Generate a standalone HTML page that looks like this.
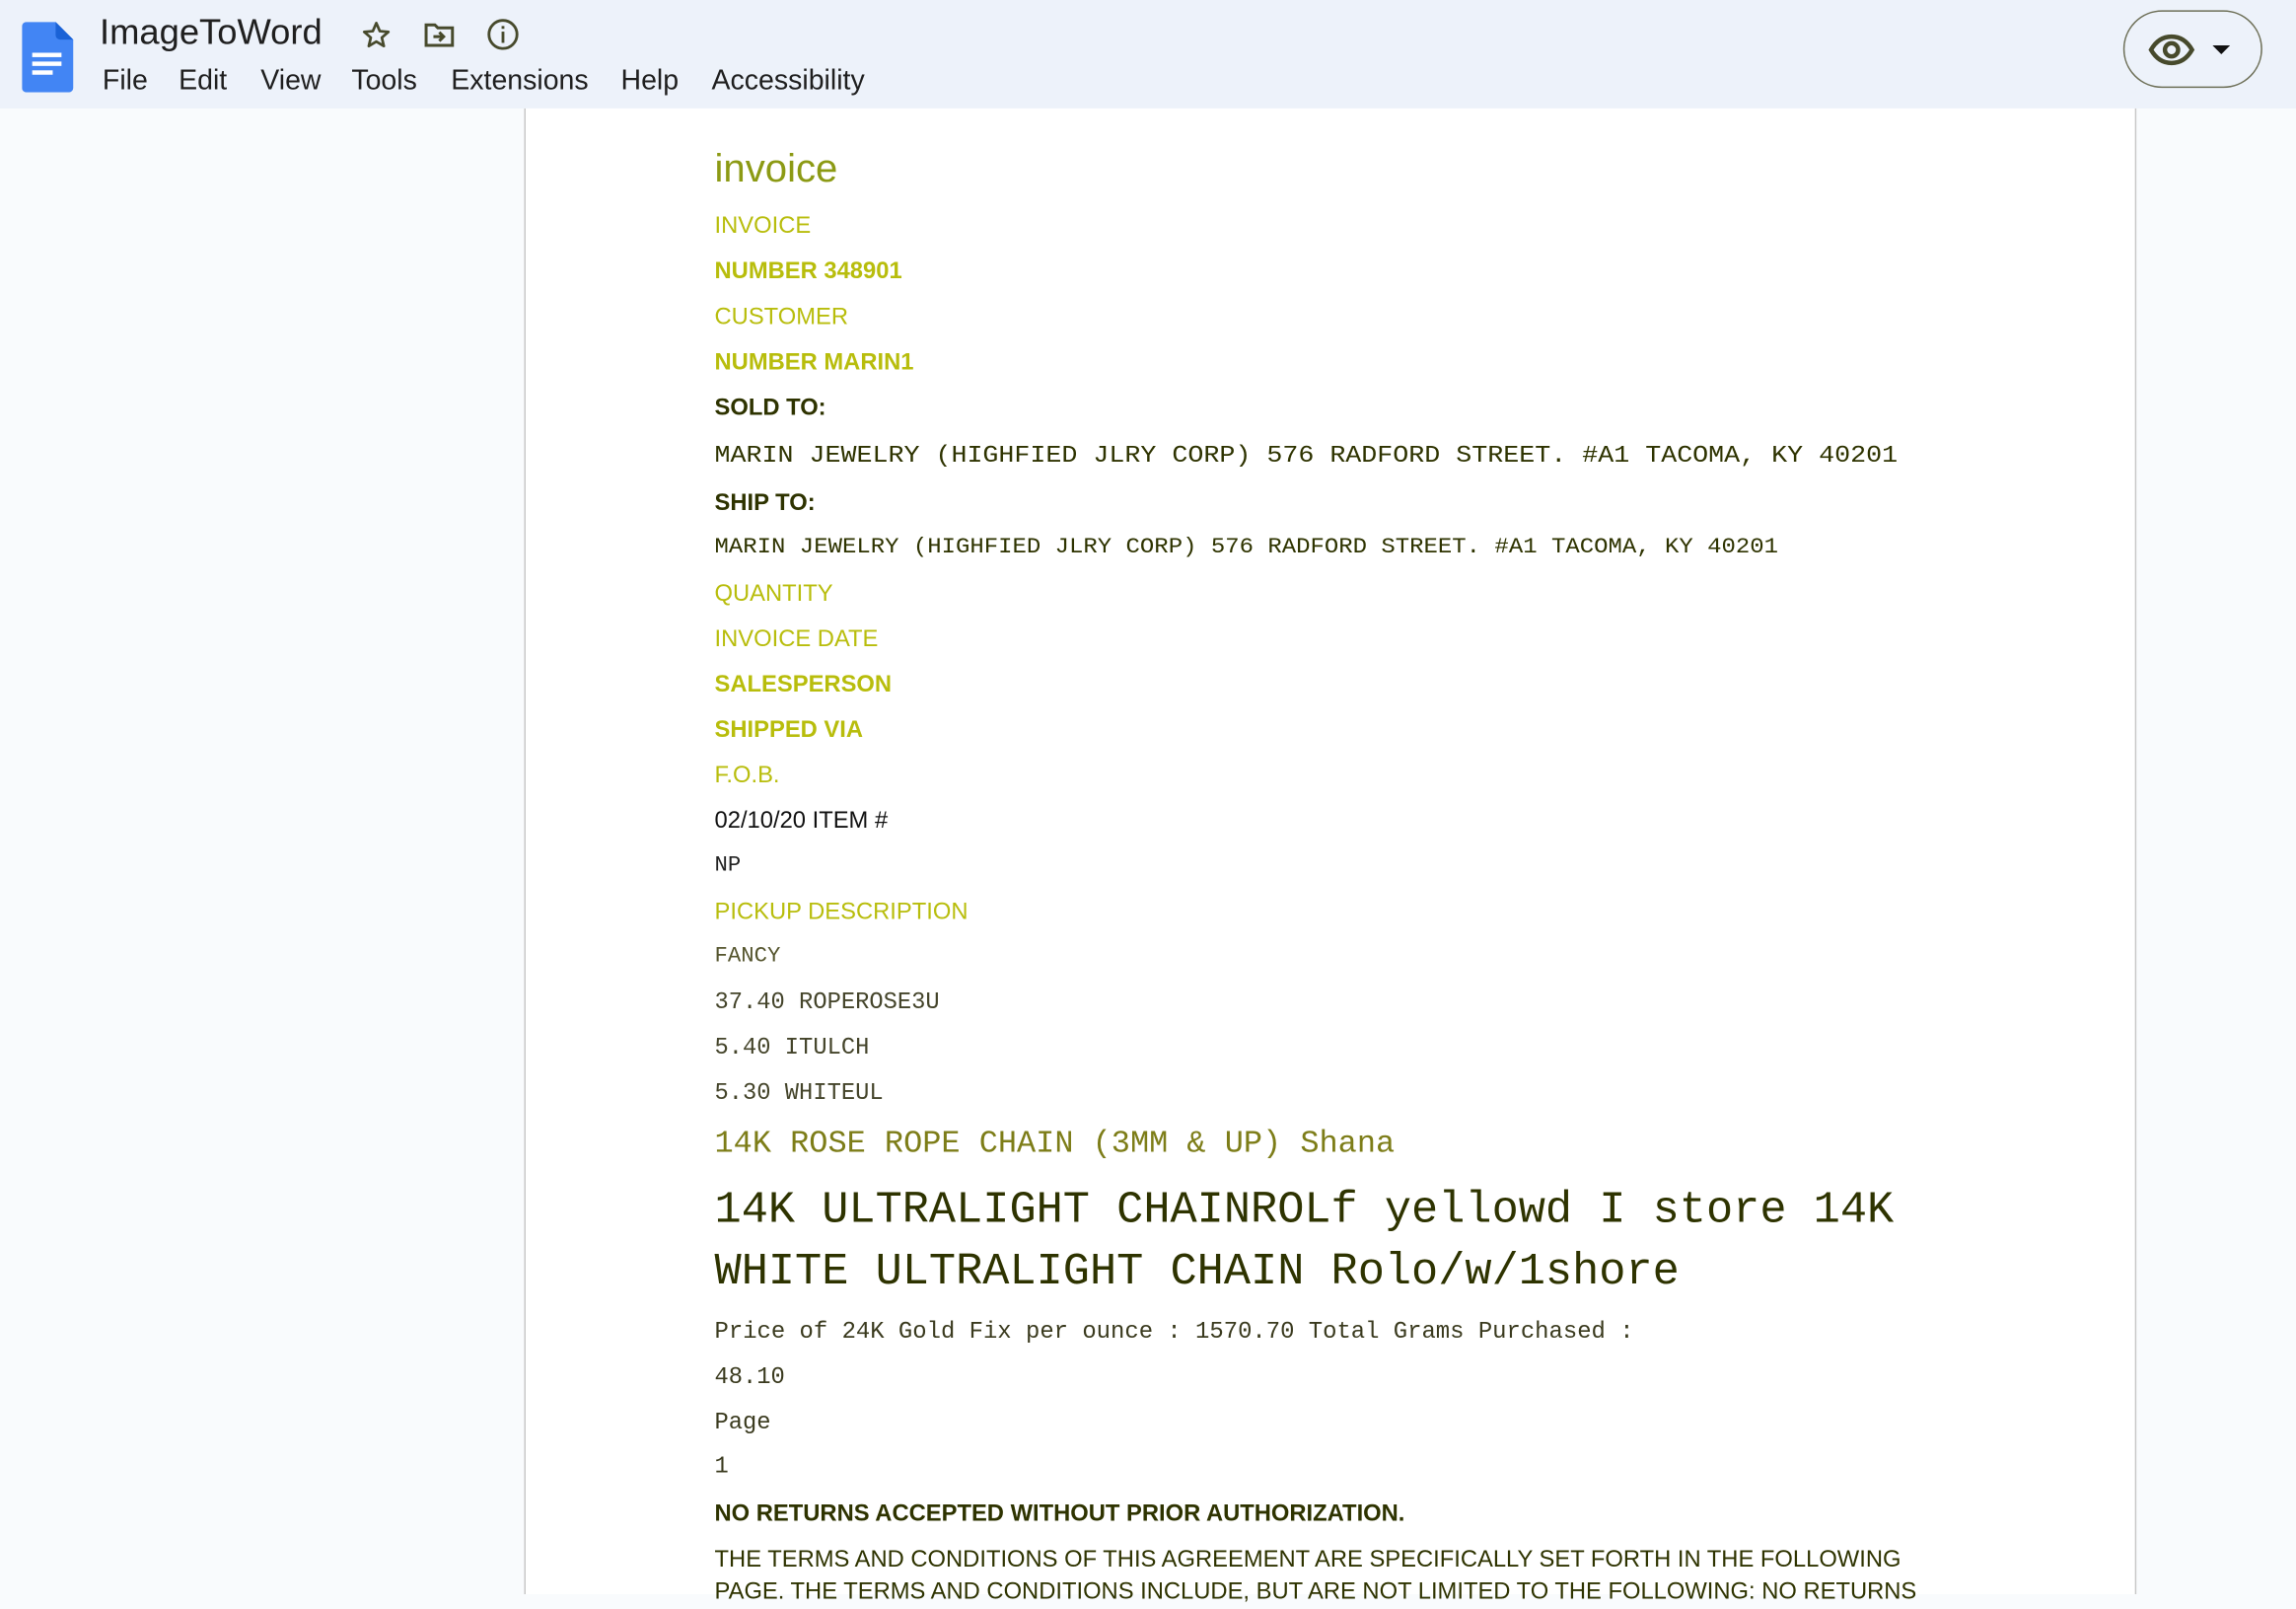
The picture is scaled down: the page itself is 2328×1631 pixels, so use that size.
<!DOCTYPE html>
<html><head><meta charset="utf-8"><style>
html,body{margin:0;padding:0;width:2328px;height:1616px;overflow:hidden;background:#f9fbfd;}
#w{position:absolute;left:0;top:0;width:1568px;height:1088px;transform:scale(1.48469,1.4853);transform-origin:0 0;font-family:"Liberation Sans",Arial,sans-serif;}
#hdr{position:absolute;left:0;top:0;width:1568px;height:74px;background:#edf2fa;}
#page{position:absolute;left:358px;top:74px;width:1099px;height:1014px;background:#fff;border-left:1px solid #c7c7c7;border-right:1px solid #c7c7c7;}
.t{position:absolute;left:488px;white-space:pre;line-height:20px;}
.s{font-size:16px;margin-top:2px;}
.m{font-family:"Liberation Mono","Courier New",monospace;}
.y{color:#b8bd0c;}
.d{color:#2e3300;}
.b{font-weight:bold;}
.menu{position:absolute;top:45px;font-size:19.2px;color:#1f1f1f;}
</style></head><body><div id="w">
<div id="hdr">
 <svg style="position:absolute;left:15px;top:15px" width="36" height="48" viewBox="0 0 36 48">
  <path d="M3 0H23L35 12V45a3 3 0 0 1-3 3H3a3 3 0 0 1-3-3V3a3 3 0 0 1 3-3z" fill="#4285f4"/>
  <path d="M23 0L35 12H26a3 3 0 0 1-3-3z" fill="#1a62d6"/>
  <rect x="7" y="21" width="20" height="3" fill="#fff"/><rect x="7" y="27" width="20" height="3" fill="#fff"/><rect x="7" y="33" width="14" height="3" fill="#fff"/>
 </svg>
 <div style="position:absolute;left:68px;top:9px;font-size:24.5px;color:#1f1f1f;">ImageToWord</div>
 <svg style="position:absolute;left:246px;top:13px" width="22" height="22" viewBox="0 0 24 24"><path d="M12 3l2.6 6 6.4.6-4.9 4.2 1.5 6.3L12 16.8 6.4 20.1l1.5-6.3L3 9.6l6.4-.6z" fill="none" stroke="#474a2c" stroke-width="2" stroke-linejoin="round"/></svg>
 <svg style="position:absolute;left:289px;top:14px" width="22" height="20" viewBox="0 0 22 20"><path d="M2 3h6l2 2h10v12H2z" fill="none" stroke="#474a2c" stroke-width="2"/><path d="M7 11h7M11 8l3 3-3 3" fill="none" stroke="#474a2c" stroke-width="2"/></svg>
 <svg style="position:absolute;left:332px;top:12px" width="23" height="23" viewBox="0 0 24 24"><circle cx="12" cy="12" r="10" fill="none" stroke="#474a2c" stroke-width="2"/><rect x="11" y="10" width="2" height="8" fill="#474a2c"/><rect x="11" y="6" width="2" height="2" fill="#474a2c"/></svg>
 <div class="menu" style="left:70px">File</div>
 <div class="menu" style="left:122px">Edit</div>
 <div class="menu" style="left:178px">View</div>
 <div class="menu" style="left:240px">Tools</div>
 <div class="menu" style="left:308px">Extensions</div>
 <div class="menu" style="left:424px">Help</div>
 <div class="menu" style="left:486px">Accessibility</div>
 <div style="position:absolute;left:1450px;top:7px;width:95px;height:53px;border:1.5px solid #6e7058;border-radius:27px;box-sizing:border-box;"></div>
 <svg style="position:absolute;left:1467px;top:23px" width="32" height="22" viewBox="0 0 32 22"><path d="M2 11C6 4 11 2 16 2s10 2 14 9c-4 7-9 9-14 9S6 18 2 11z" fill="none" stroke="#474a2c" stroke-width="3"/><circle cx="16" cy="11" r="4.5" fill="none" stroke="#474a2c" stroke-width="3"/></svg>
 <svg style="position:absolute;left:1511px;top:31px" width="12" height="7"><path d="M0 0h12L6 6z" fill="#111"/></svg>
</div>
<div id="page"></div>

<div class="t" style="top:99px;font-size:27px;line-height:32px;color:#8c9a14;">invoice</div>
<div class="t s y" style="top:143px">INVOICE</div>
<div class="t s y b" style="top:174px">NUMBER 348901</div>
<div class="t s y" style="top:205px">CUSTOMER</div>
<div class="t s y b" style="top:236px">NUMBER MARIN1</div>
<div class="t s d b" style="top:267px">SOLD TO:</div>
<div class="t m d" style="top:301px;font-size:16px;transform:scaleX(1.122);transform-origin:0 0">MARIN JEWELRY (HIGHFIED JLRY CORP) 576 RADFORD STREET. #A1 TACOMA, KY 40201</div>
<div class="t s d b" style="top:332px">SHIP TO:</div>
<div class="t m d" style="top:364px;font-size:15px;transform:scaleX(1.076);transform-origin:0 0">MARIN JEWELRY (HIGHFIED JLRY CORP) 576 RADFORD STREET. #A1 TACOMA, KY 40201</div>
<div class="t s y" style="top:394px">QUANTITY</div>
<div class="t s y" style="top:425px">INVOICE DATE</div>
<div class="t s y b" style="top:456px">SALESPERSON</div>
<div class="t s y b" style="top:487px">SHIPPED VIA</div>
<div class="t s y" style="top:518px">F.O.B.</div>
<div class="t s" style="top:549px;color:#111">02/10/20 ITEM #</div>
<div class="t m" style="top:581px;font-size:15px;color:#222">NP</div>
<div class="t s y" style="top:611px">PICKUP DESCRIPTION</div>
<div class="t m" style="top:643px;font-size:15px;color:#55552e">FANCY</div>
<div class="t m" style="top:674px;font-size:16px;color:#44442a">37.40 ROPEROSE3U</div>
<div class="t m" style="top:705px;font-size:16px;color:#44442a">5.40 ITULCH</div>
<div class="t m" style="top:736px;font-size:16px;color:#44442a">5.30 WHITEUL</div>
<div class="t m" style="top:768px;font-size:21.5px;line-height:26px;color:#7d7d18">14K ROSE ROPE CHAIN (3MM &amp; UP) Shana</div>
<div class="t m d" style="top:806px;font-size:30.5px;line-height:42px">14K ULTRALIGHT CHAINROLf yellowd I store 14K
WHITE ULTRALIGHT CHAIN Rolo/w/1shore</div>
<div class="t m" style="top:899px;font-size:16.1px;color:#3a3a1e">Price of 24K Gold Fix per ounce : 1570.70 Total Grams Purchased :</div>
<div class="t m" style="top:930px;font-size:16px;color:#3a3a1e">48.10</div>
<div class="t m" style="top:961px;font-size:16px;color:#3a3a1e">Page</div>
<div class="t m" style="top:991px;font-size:16px;color:#3a3a1e">1</div>
<div class="t s d b" style="top:1022px">NO RETURNS ACCEPTED WITHOUT PRIOR AUTHORIZATION.</div>
<div class="t s d" style="top:1052px;line-height:22px">THE TERMS AND CONDITIONS OF THIS AGREEMENT ARE SPECIFICALLY SET FORTH IN THE FOLLOWING
PAGE. THE TERMS AND CONDITIONS INCLUDE, BUT ARE NOT LIMITED TO THE FOLLOWING: NO RETURNS</div>
</div></body></html>
